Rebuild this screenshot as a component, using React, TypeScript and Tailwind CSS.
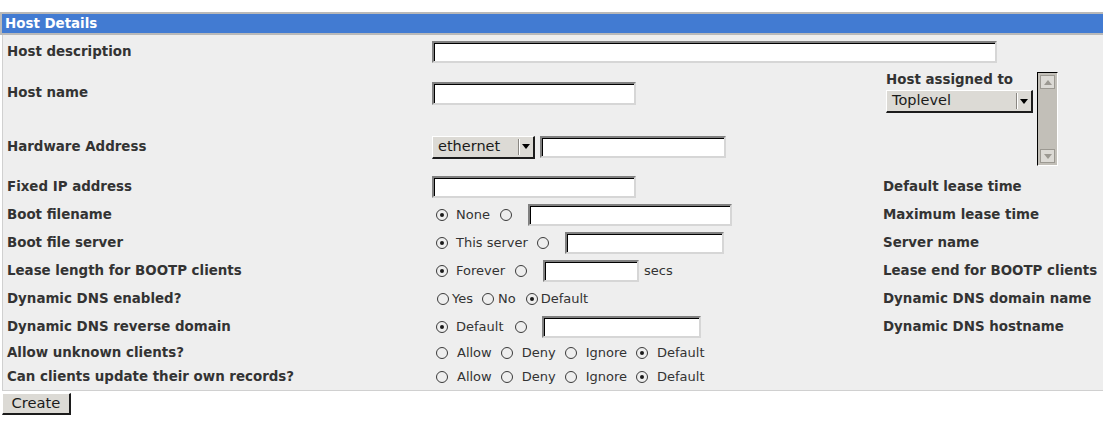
import React from "react";

function Radio({ on = false, className = "" }: { on?: boolean; className?: string }) {
  return (
    <span
      className={`inline-flex h-[12px] w-[12px] shrink-0 items-center justify-center rounded-full border border-[#3a3a3a] ${className}`}
    >
      {on && <span className="h-[4px] w-[4px] rounded-full bg-[#1a1a1a]" />}
    </span>
  );
}

function Field({ className = "" }: { className?: string }) {
  return (
    <input
      type="text"
      className={`h-[22px] shrink-0 border-2 border-t-[#808080] border-l-[#808080] border-r-[#d6d6d6] border-b-[#d6d6d6] bg-white shadow-[inset_1px_1px_0_#000] outline-none ${className}`}
    />
  );
}

function Arrow({ color = "#000", up = false }: { color?: string; up?: boolean }) {
  return (
    <svg width="8" height="5" viewBox="0 0 8 5">
      <polygon points={up ? "0,5 8,5 4,0" : "0,0 8,0 4,5"} fill={color} />
    </svg>
  );
}

function Select({ value, className = "" }: { value: string; className?: string }) {
  return (
    <div
      className={`flex h-[23px] shrink-0 items-stretch border-t border-l border-r-2 border-b-2 border-t-white border-l-white border-r-[#1c1c1c] border-b-[#1c1c1c] bg-[#dcdad5] text-[14.5px] text-[#1a1a1a] ${className}`}
    >
      <span className="flex flex-1 items-center pl-[5px]">{value}</span>
      <span className="my-[2px] flex w-[15px] items-center justify-center border-l border-l-[#8a8782] shadow-[inset_1px_0_0_#fff]">
        <Arrow />
      </span>
    </div>
  );
}

function ListBox() {
  return (
    <div className="flex h-[94px] w-[21px] flex-col border border-t-black border-l-black border-r-white border-b-white bg-[#c2bfb8] p-[2px]">
      <div className="flex h-[14px] items-center justify-center border border-[#9c9992] bg-[#dcdad5]">
        <Arrow up color="#9c9992" />
      </div>
      <div className="flex-1" />
      <div className="flex h-[14px] items-center justify-center border border-[#9c9992] bg-[#dcdad5]">
        <Arrow color="#9c9992" />
      </div>
    </div>
  );
}

function Label({ children }: { children: React.ReactNode }) {
  return <div className="flex items-center whitespace-nowrap pl-[4px] text-[13.4px] font-bold">{children}</div>;
}

function RightLabel({ children }: { children?: React.ReactNode }) {
  return <div className="flex items-center whitespace-nowrap text-[13.4px] font-bold">{children}</div>;
}

const choices = ["Allow", "Deny", "Ignore", "Default"];

function FourWay() {
  return (
    <div className="flex items-center">
      {choices.map((c, i) => (
        <React.Fragment key={c}>
          <Radio on={c === "Default"} className={i === 0 ? "ml-[4px]" : "ml-[9px]"} />
          <span className="ml-[9px]">{c}</span>
        </React.Fragment>
      ))}
    </div>
  );
}

export default function App() {
  return (
    <div className="min-h-[423px] bg-white pt-[12px] font-['DejaVu_Sans',sans-serif] text-[13px] text-[#333]">
      <div className="h-[23px] border-2 border-r-0 border-[#b9b9b9] bg-[#427bd2] pl-[3px] text-[13.4px] font-bold leading-[19px] text-white">
        Host Details
      </div>

      <div className="ml-[2px] border-b border-l border-[#d0d0d0] bg-[#eeeeee] pt-[4px] pb-[1px]">
        <div className="grid grid-cols-[429px_451px_1fr] grid-rows-[26px_56px_52px_28px_28px_28px_28px_28px_28px_24px_24px]">
          {/* host description */}
          <Label>Host description</Label>
          <div className="col-span-2 flex items-center">
            <Field className="w-[565px]" />
          </div>

          {/* host name */}
          <Label>Host name</Label>
          <div className="flex items-center">
            <Field className="h-[23px] w-[204px]" />
          </div>
          <div className="row-span-2 flex items-center pl-[3px]">
            <div className="flex items-start">
              <div className="flex flex-col">
                <span className="whitespace-nowrap text-[13.4px] font-bold leading-[16px]">Host assigned to</span>
                <Select value="Toplevel" className="mt-[2px] h-[22px] w-[147px]" />
              </div>
              <div className="ml-[4px]">
                <ListBox />
              </div>
            </div>
          </div>

          {/* hardware address */}
          <Label>Hardware Address</Label>
          <div className="flex items-center">
            <Select value="ethernet" className="w-[103px]" />
            <Field className="ml-[5px] w-[186px]" />
          </div>

          {/* fixed ip */}
          <Label>Fixed IP address</Label>
          <div className="flex items-center">
            <Field className="w-[204px]" />
          </div>
          <RightLabel>Default lease time</RightLabel>

          {/* boot filename */}
          <Label>Boot filename</Label>
          <div className="flex items-center">
            <Radio on className="ml-[4px]" />
            <span className="ml-[8px]">None</span>
            <Radio className="ml-[10px]" />
            <Field className="ml-[16px] w-[204px]" />
          </div>
          <RightLabel>Maximum lease time</RightLabel>

          {/* boot file server */}
          <Label>Boot file server</Label>
          <div className="flex items-center">
            <Radio on className="ml-[4px]" />
            <span className="ml-[8px]">This server</span>
            <Radio className="ml-[9px]" />
            <Field className="ml-[16px] w-[159px]" />
          </div>
          <RightLabel>Server name</RightLabel>

          {/* lease length */}
          <Label>Lease length for BOOTP clients</Label>
          <div className="flex items-center">
            <Radio on className="ml-[4px]" />
            <span className="ml-[8px]">Forever</span>
            <Radio className="ml-[10px]" />
            <Field className="ml-[16px] w-[96px]" />
            <span className="ml-[5px]">secs</span>
          </div>
          <RightLabel>Lease end for BOOTP clients</RightLabel>

          {/* ddns enabled */}
          <Label>Dynamic DNS enabled?</Label>
          <div className="flex items-center">
            <Radio className="ml-[5px]" />
            <span className="ml-[3px]">Yes</span>
            <Radio className="ml-[9px]" />
            <span className="ml-[4px]">No</span>
            <Radio on className="ml-[10px]" />
            <span className="ml-[3px]">Default</span>
          </div>
          <RightLabel>Dynamic DNS domain name</RightLabel>

          {/* ddns reverse */}
          <Label>Dynamic DNS reverse domain</Label>
          <div className="flex items-center">
            <Radio on className="ml-[4px]" />
            <span className="ml-[8px]">Default</span>
            <Radio className="ml-[11px]" />
            <Field className="ml-[15px] w-[159px]" />
          </div>
          <RightLabel>Dynamic DNS hostname</RightLabel>

          {/* unknown clients */}
          <Label>Allow unknown clients?</Label>
          <FourWay />
          <RightLabel />

          {/* client updates */}
          <Label>Can clients update their own records?</Label>
          <FourWay />
          <RightLabel />
        </div>
      </div>

      <button
        type="button"
        className="ml-[2px] mt-[2px] h-[22px] w-[69px] border-t border-l border-r-2 border-b-2 border-t-white border-l-white border-r-[#1c1c1c] border-b-[#1c1c1c] bg-[#dcdad5] text-[14.7px] leading-none text-[#1a1a1a]"
      >
        Create
      </button>
    </div>
  );
}
